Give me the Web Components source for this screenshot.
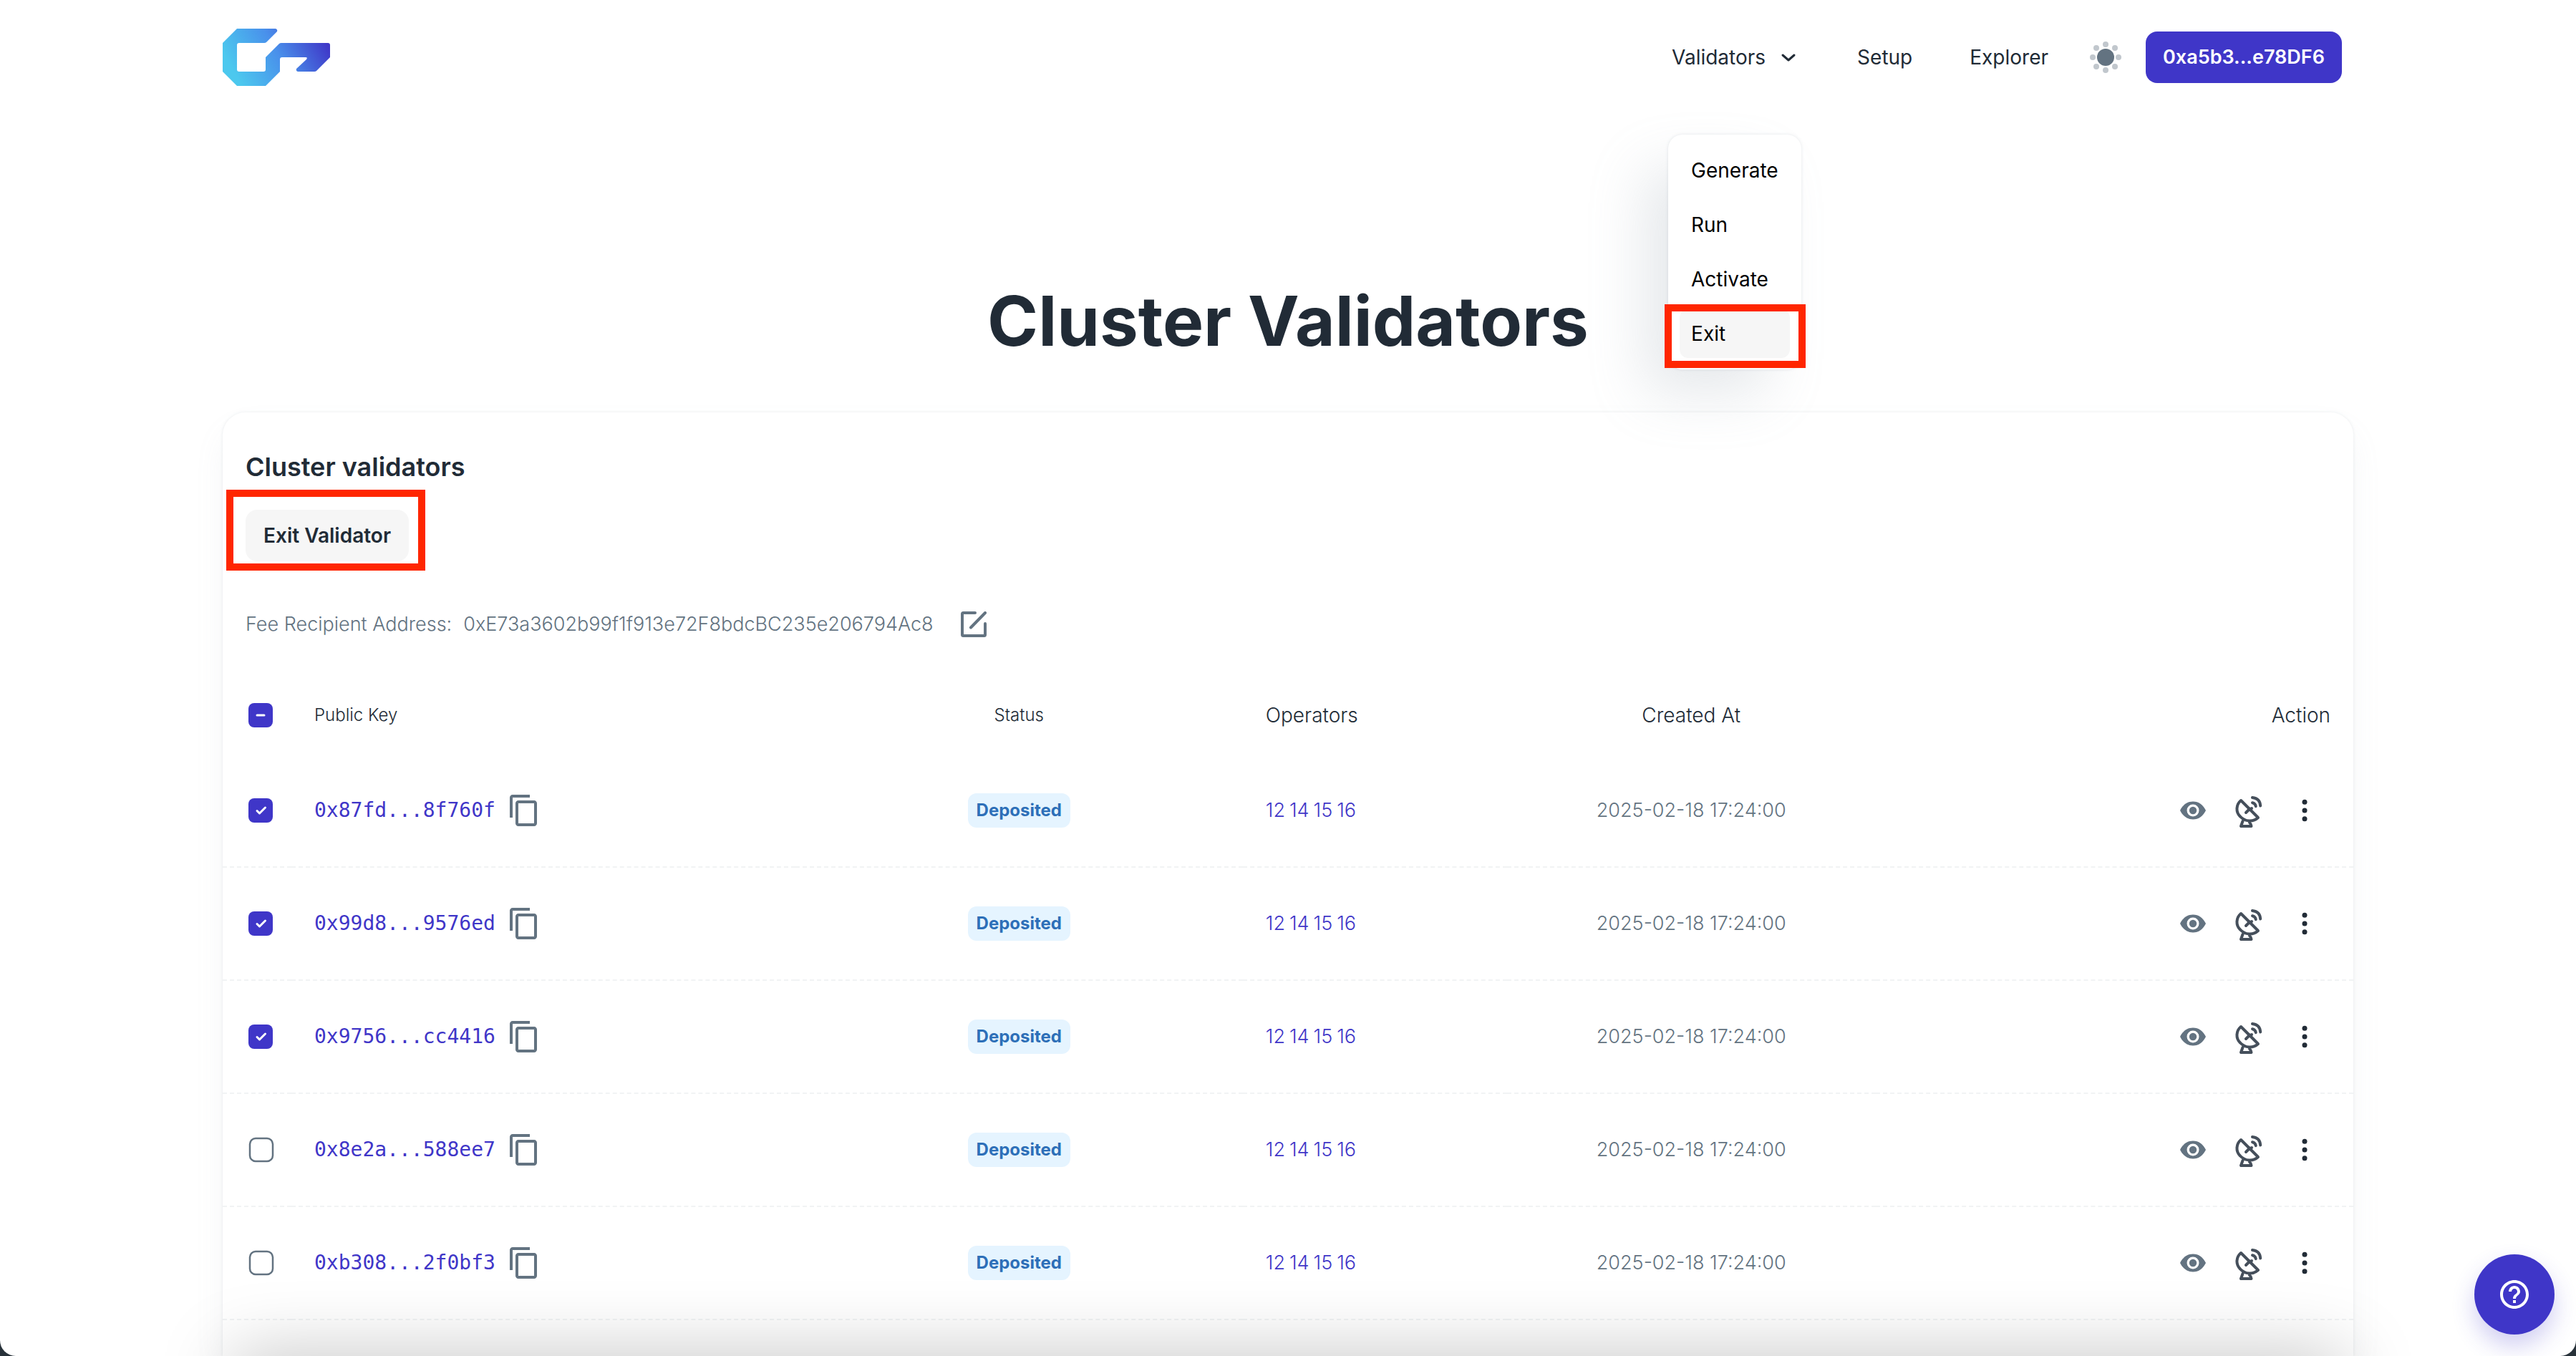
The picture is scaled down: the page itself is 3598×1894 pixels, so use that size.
<!DOCTYPE html>
<html lang="en">
<head>
<meta charset="utf-8">
<title>Cluster Validators</title>
<style>
  html, body { margin: 0; height: 100%; }
  body {
    --primary: #3f36c8;
    --ink: #212b36;
    --muted: #637381;
    --soft: #f6f6f6;
    --line: #f1f3f4;
    --mark: #ff2600;
    background: #28323a;
    color: var(--ink);
    font: 350 28px/44px Inter, "Noto Sans", sans-serif;
    overflow: hidden;
  }
</style>
</head>
<body>
<app-shell>
  <app-header slot="header">
    <nav-menu label="Validators">
      <menu-item>Generate</menu-item>
      <menu-item>Run</menu-item>
      <menu-item>Activate</menu-item>
      <menu-item active>Exit</menu-item>
    </nav-menu>
    <nav-link>Setup</nav-link>
    <nav-link>Explorer</nav-link>
  </app-header>
  <span slot="title">Cluster Validators</span>
  <validators-card></validators-card>
  <help-fab slot="fab"></help-fab>
</app-shell>

<script>
const ICONS = {
  logo: ['0 0 150 80', `<defs><linearGradient id="g" gradientUnits="userSpaceOnUse" x1="22" y1="72" x2="138" y2="8"><stop offset="0" stop-color="#4cc8ee"/><stop offset=".5" stop-color="#4990eb"/><stop offset="1" stop-color="#3f38c8"/></linearGradient></defs><path fill="url(#g)" d="M20 0H74Q77 1 76 4L61 19Q60 20 58 20H23Q20 20 20 23V57Q20 60 23 60H57Q60 60 60 57V40L79 21Q80 20 82 20H147Q150 20 150 23V40L131 59Q130 60 128 60H105Q102 59 103 56L117 43Q119 40 116 40H83Q80 40 80 43V60L60 80H20L0 60V20Z"/>`],
  chevron: ['0 0 32 32', '<path d="M8 13l8 7 8-7" fill="none" stroke="currentColor" stroke-width="3" stroke-linecap="round" stroke-linejoin="round"/>'],
  sun: ['0 0 48 48', '<circle cx="24" cy="24" r="12" fill="#637381"/><g fill="#c1c7cd"><circle cx="24" cy="6" r="4"/><circle cx="24" cy="42" r="4"/><circle cx="6" cy="24" r="4"/><circle cx="42" cy="24" r="4"/><circle cx="11" cy="11" r="4"/><circle cx="37" cy="11" r="4"/><circle cx="11" cy="37" r="4"/><circle cx="37" cy="37" r="4"/></g>'],
  edit: ['0 0 36 36', '<path d="M20 2H3.500Q2 2 2 3.500V32.500Q2 34 3.500 34H32.500Q34 34 34 32.500V17M14 22.500L34 2" fill="none" stroke="currentColor" stroke-width="4" stroke-linecap="round"/>'],
  copy: ['0 0 24 24', '<path fill="currentColor" d="M16 1H4c-1.100 0-2 .9-2 2v14h2V3h12V1zm3 4H8c-1.100 0-2 .9-2 2v14c0 1.100.9 2 2 2h11c1.100 0 2-.9 2-2V7c0-1.100-.9-2-2-2zm0 16H8V7h11v14z"/>'],
  eye: ['0 0 36 26', '<path fill="currentColor" fill-rule="evenodd" d="M0 13C4 5 10 .5 18 .5S32 5 36 13C32 21 26 25.500 18 25.500S4 21 0 13ZM18 4.500a8.500 8.500 0 1 0 0 17a8.500 8.500 0 1 0 0-17Z"/><circle cx="18" cy="13" r="5.200" fill="currentColor"/>'],
  dish: ['0 0 38 44', '<g fill="none" stroke="currentColor" stroke-width="4" stroke-linecap="round" stroke-linejoin="round"><path d="M8 6C1 12 .5 22 7 28.500C14 36 25 36.500 32 30Z"/><path d="M15 23l5-5m-1-1l2 2l2-2"/><path d="M24 9.200q4 .8 4.800 5"/><path d="M24 2q10.500 1 11.200 11.500"/><path d="M10.500 35L8 42H22.500Q22 38.500 20 37"/></g>'],
  dots: ['0 0 8 32', '<g fill="currentColor"><circle cx="4" cy="4.300" r="3.500"/><circle cx="4" cy="16" r="3.500"/><circle cx="4" cy="27.700" r="3.500"/></g>'],
  help: ['0 0 24 24', '<path fill="currentColor" d="M11 18h2v-2h-2v2zm1-16C6.480 2 2 6.480 2 12s4.480 10 10 10 10-4.480 10-10S17.520 2 12 2zm0 18c-4.410 0-8-3.590-8-8s3.590-8 8-8 8 3.590 8 8-3.590 8-8 8zm0-14c-2.210 0-4 1.790-4 4h2c0-1.100.9-2 2-2s2 .9 2 2c0 2-3 1.750-3 5h2c0-2.250 3-2.500 3-5 0-2.210-1.790-4-4-4z"/>']
};

const RESET = `
  *, *::before, *::after { box-sizing: border-box; }
  button { font: inherit; color: inherit; background: none; border: 0; padding: 0; margin: 0; cursor: pointer; }
  a { color: inherit; text-decoration: none; }
`;

class Base extends HTMLElement {
  constructor() { super(); this.attachShadow({ mode: 'open' }); }
  connectedCallback() {
    if (this.shadowRoot.childNodes.length) return;
    const t = document.createElement('template');
    t.innerHTML = `<style>${RESET}${this.styles()}</style>${this.view()}`;
    this.shadowRoot.append(t.content.cloneNode(true));
    this.ready();
  }
  styles() { return ''; }
  view() { return '<slot></slot>'; }
  ready() {}
}

customElements.define('ui-icon', class extends Base {
  styles() { return ':host{display:block;flex:none} svg{display:block;width:100%;height:100%}'; }
  view() {
    const [box, body] = ICONS[this.getAttribute('name')];
    return `<svg viewBox="${box}" aria-hidden="true">${body}</svg>`;
  }
});

/* Highlight frame laid over the control it calls out */
customElements.define('call-out', class extends Base {
  styles() { return `
    :host{display:block;position:absolute;z-index:3;pointer-events:none;border:10px solid var(--mark)}`; }
});

customElements.define('app-shell', class extends Base {
  styles() { return `
    :host{display:flex;flex-direction:column;height:100vh;overflow:hidden;position:relative;
      background:#fff;border-radius:0 0 22px 22px}
    main{flex:1;display:flex;flex-direction:column;width:100%;max-width:3072px;margin:0 auto;padding:228px 48px 0}
    h1{margin:0 0 68px;font-size:96px;line-height:120px;font-weight:700;text-align:center}
    .shade{position:absolute;top:100%;left:9%;right:9%;height:80px;box-shadow:0 0 100px rgba(0,0,0,.25)}
    ::slotted(help-fab){position:absolute;right:30px;bottom:30px}
  `; }
  view() { return `
    <slot name="header"></slot>
    <main><h1><slot name="title"></slot></h1><slot></slot></main>
    <div class="shade"></div>
    <slot name="fab"></slot>`; }
});

customElements.define('app-header', class extends Base {
  styles() { return `
    :host{display:block;position:relative;z-index:2}
    header{display:flex;align-items:center;width:100%;max-width:3072px;height:160px;margin:0 auto;padding:0 64px 0 48px}
    .logo{width:150px;height:80px;margin-right:auto}
    nav{display:flex;align-items:center;gap:80px}
    .mode{margin:0 32px 0 56px}
    .mode ui-icon{width:48px;height:48px}
    .wallet{height:72px;padding:0 24px;border-radius:16px;background:var(--primary);color:#fff;font-size:27px;font-weight:600}
  `; }
  view() { return `<header>
    <a class="logo" href="#" aria-label="Home"><ui-icon name="logo"></ui-icon></a>
    <nav><slot></slot></nav>
    <button class="mode" aria-label="Toggle theme"><ui-icon name="sun"></ui-icon></button>
    <button class="wallet">0xa5b3...e78DF6</button>
  </header>`; }
});

customElements.define('nav-link', class extends Base {
  styles() { return ':host{display:block;font-weight:400}'; }
  view() { return '<a href="#"><slot></slot></a>'; }
});

customElements.define('nav-menu', class extends Base {
  styles() { return `
    :host{display:block;position:relative;font-weight:400}
    .trigger{display:flex;align-items:center;gap:16px}
    .trigger ui-icon{width:32px;height:32px}
    .menu{position:absolute;top:130px;left:-5px;display:flex;flex-direction:column;gap:8px;padding:16px;
      border-radius:20px;background:#fff;color:#000;
      box-shadow:0 0 4px rgba(145,158,171,.24),-40px 40px 80px -8px rgba(145,158,171,.24)}
  `; }
  view() { return `
    <button class="trigger" aria-expanded="true">${this.getAttribute('label')}<ui-icon name="chevron"></ui-icon></button>
    <div class="menu"><slot></slot></div>`; }
});

customElements.define('menu-item', class extends Base {
  styles() { return `
    :host{display:block;position:relative}
    a{display:flex;align-items:center;height:68px;padding:0 16px;border-radius:12px}
    :host([active]) a{background:var(--soft)}
    call-out{inset:-7px -22px -14px -21px}
  `; }
  view() { return `<a href="#"><slot></slot></a>${this.hasAttribute('active') ? '<call-out></call-out>' : ''}`; }
});

customElements.define('check-box', class extends Base {
  styles() { return `
    :host{display:block;width:40px;height:40px}
    label{display:grid;width:40px;height:40px}
    input,svg{grid-area:1/1;width:40px;height:40px;margin:0}
    input{appearance:none}
    svg{pointer-events:none;fill:none;stroke-linecap:round;stroke-linejoin:round}
    .off{stroke:var(--muted);stroke-width:2.500}
    .on{fill:var(--primary)}
    .tick,.dash{stroke:#fff;stroke-width:3}
    .on,.tick,.dash{display:none}
    input:checked~svg .on,input:indeterminate~svg .on,
    input:checked~svg .tick,input:indeterminate~svg .dash{display:inline}
    input:checked~svg .off,input:indeterminate~svg .off{display:none}
  `; }
  view() { return `<label><input type="checkbox" aria-label="${this.getAttribute('label')}"${this.getAttribute('state') === 'on' ? ' checked' : ''}>
    <svg viewBox="0 0 40 40"><rect class="off" x="6" y="4" width="32" height="32" rx="8"/>
    <rect class="on" x="4" y="3" width="34" height="34" rx="8"/>
    <path class="tick" d="M16 20.500l3.500 3.500l8-8"/><path class="dash" d="M16 20h10"/></svg></label>`; }
  ready() { if (this.getAttribute('state') === 'mixed') this.shadowRoot.querySelector('input').indeterminate = true; }
});

customElements.define('status-badge', class extends Base {
  styles() { return `
    :host{display:inline-flex;align-items:center;height:48px;padding:0 12px;border-radius:12px;
      background:#e5f4ff;color:#2d6fb8;font-size:24px;line-height:36px;font-weight:700;vertical-align:middle}`; }
});

customElements.define('validator-table', class extends Base {
  styles() { return `
    :host{display:block}
    table{width:100%;border-collapse:separate;border-spacing:0;table-layout:fixed}
    .c1{width:96px}.c2{width:23.650%}.c3{width:21%}.c4{width:12.400%}.c5{width:17.300%}
    th,td{padding:0 32px;text-align:left;font-weight:350;white-space:nowrap}
    th{height:110px}
    th.small{font-size:24px}
    td{height:158px;border-bottom:2px dashed var(--line)}
    th:first-child,td:first-child{padding:0 0 0 32px}
    .mid{text-align:center}
    th.end{text-align:right}
    .key{display:flex;align-items:center;gap:16px;color:var(--primary);font-family:"DejaVu Sans Mono",monospace}
    .key button{color:var(--muted)}
    .key ui-icon{width:48px;height:48px}
    .ops{display:flex;gap:6px;color:var(--primary);font-size:27px}
    .date{color:var(--muted);font-size:27px}
    .acts{display:flex;justify-content:flex-end;gap:6px}
    .acts button{display:grid;place-items:center;width:72px;height:72px}
    .eye{width:36px;height:26px;color:var(--muted)}
    .dish{width:38px;height:44px;margin-top:4px;color:#454f5b}
    .dots{width:8px;height:32px}
  `; }
  view() {
    const rows = [['0x87fd...8f760f', 1], ['0x99d8...9576ed', 1], ['0x9756...cc4416', 1], ['0x8e2a...588ee7', 0], ['0xb308...2f0bf3', 0]];
    return `<table>
      <colgroup><col class="c1"><col class="c2"><col class="c3"><col class="c4"><col class="c5"><col></colgroup>
      <thead><tr><th><check-box state="mixed" label="Select all"></check-box></th><th class="small">Public Key</th>
        <th class="small mid">Status</th><th>Operators</th><th class="mid">Created At</th><th class="end">Action</th></tr></thead>
      <tbody>${rows.map(([key, on]) => `<tr>
        <td><check-box state="${on ? 'on' : 'off'}" label="Select ${key}"></check-box></td>
        <td><div class="key"><a href="#">${key}</a><button aria-label="Copy key"><ui-icon name="copy"></ui-icon></button></div></td>
        <td class="mid"><status-badge>Deposited</status-badge></td>
        <td><div class="ops"><a href="#">12</a><a href="#">14</a><a href="#">15</a><a href="#">16</a></div></td>
        <td class="mid date">2025-02-18 17:24:00</td>
        <td><div class="acts"><button aria-label="View"><ui-icon class="eye" name="eye"></ui-icon></button>
          <button aria-label="Broadcast"><ui-icon class="dish" name="dish"></ui-icon></button>
          <button aria-label="More"><ui-icon class="dots" name="dots"></ui-icon></button></div></td></tr>`).join('')}
      </tbody></table>`;
  }
});

customElements.define('validators-card', class extends Base {
  styles() { return `
    :host{display:block;flex:1;padding-top:48px;border-radius:32px 32px 0 0;background:#fff;
      box-shadow:0 0 4px rgba(145,158,171,.2),0 24px 48px -8px rgba(145,158,171,.12)}
    .top{padding:0 32px}
    h2{margin:0 0 32px;font-size:36px;line-height:56px;font-weight:600}
    .exit{position:relative;height:72px;padding:0 25px;border-radius:16px;background:var(--soft);font-weight:600}
    .exit call-out{inset:-28px -23px -13px -27px}
    .fee{display:flex;align-items:center;height:80px;margin:48px 0 32px;color:var(--muted);font-size:27px}
    .fee span{margin-left:16px}
    .fee button{margin-left:38px}
    .fee ui-icon{width:36px;height:36px}
  `; }
  view() { return `
    <div class="top">
      <h2>Cluster validators</h2>
      <button class="exit">Exit Validator<call-out></call-out></button>
      <div class="fee">Fee Recipient Address:<span>0xE73a3602b99f1f913e72F8bdcBC235e206794Ac8</span>
        <button aria-label="Edit address"><ui-icon name="edit"></ui-icon></button></div>
    </div>
    <validator-table></validator-table>`; }
});

customElements.define('help-fab', class extends Base {
  styles() { return `
    :host{display:block;z-index:4}
    button{display:grid;place-items:center;width:112px;height:112px;border-radius:50%;background:var(--primary);color:#fff;
      box-shadow:0 16px 32px rgba(63,54,200,.24)}
    ui-icon{width:48px;height:48px}
  `; }
  view() { return '<button aria-label="Help"><ui-icon name="help"></ui-icon></button>'; }
});
</script>
</body>
</html>
